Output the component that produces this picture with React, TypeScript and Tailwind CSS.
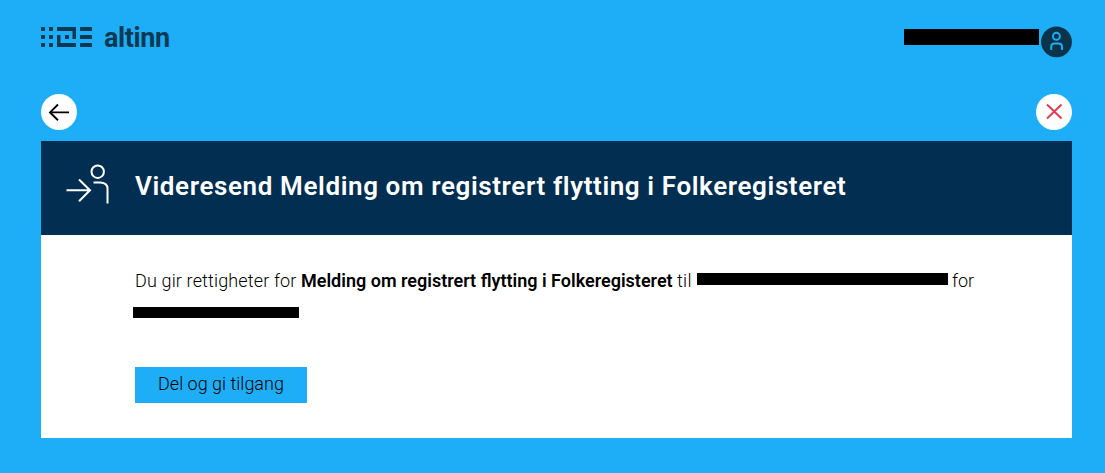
const squares: [number, number, number, number][] = [
  [0, 0, 4, 4], [0, 8, 4, 4], [0, 16, 4, 4],
  [8, 0, 4, 4], [8, 8, 4, 4], [8, 16, 4, 4],
  [39, 0, 12, 4], [39, 8, 12, 4], [39, 16, 12, 4],
  [24, 8, 4, 4],
];

function Logo() {
  return (
    <div className="flex items-start">
      <svg className="mt-[3px]" width="51" height="20" viewBox="0 0 51 20" fill="#0a3a53">
        {squares.map(([x, y, w, h]) => (
          <rect key={`${x}-${y}`} x={x} y={y} width={w} height={h} />
        ))}
        <path d="M16 0H35V12H31.5V4H16ZM16 8H19.5V16H35V20H16Z" />
      </svg>
      <span className="ml-3 pt-px text-[27px] leading-[27px] font-bold tracking-[-0.4px] text-[#0a3a53]">altinn</span>
    </div>
  );
}

function Avatar() {
  return (
    <svg width="32" height="32" viewBox="0 0 32 32" fill="none">
      <circle cx="16.5" cy="15.8" r="15.4" fill="#0a3449" />
      <g stroke="#1eaef7" strokeWidth="1.9">
        <circle cx="16.4" cy="10.3" r="3.5" />
        <path d="M11.2 24V20.8Q11.2 17.5 14.5 17.5H18.5Q22 17.5 22 20.8V24" />
      </g>
    </svg>
  );
}

function ForwardIcon() {
  return (
    <svg className="mb-2 shrink-0" width="46" height="42" viewBox="0 0 46 42" fill="none" stroke="white" strokeWidth="2">
      <circle cx="32.7" cy="8.7" r="6.2" />
      <path d="M28.5 19.5H35.5Q42.5 20 42.5 25.5V40.5" />
      <path d="M1.5 27.3H25M14 16.5L25 27.3L14 38.2" />
    </svg>
  );
}

export default function App() {
  return (
    <div className="h-[473px] w-[1105px] overflow-hidden bg-[#1eaef7] pr-[33px] pl-[41px] font-['Roboto',sans-serif]">
      <header className="flex h-[94px] items-start justify-between pt-6">
        <Logo />
        <div className="flex items-start pt-0.5">
          <div className="mt-[3px] mr-px h-4 w-[135px] bg-black" />
          <Avatar />
        </div>
      </header>

      <nav className="flex h-[47px] items-start justify-between">
        <button aria-label="Tilbake" className="flex size-9 items-center justify-center rounded-full bg-white">
          <svg width="36" height="36" viewBox="0 0 36 36" fill="none" stroke="black" strokeWidth="1.9">
            <path d="M28 18.4H9M17 10.5L9 18.4L17 26.3" />
          </svg>
        </button>
        <button aria-label="Lukk" className="flex size-9 items-center justify-center rounded-full bg-white">
          <svg width="36" height="36" viewBox="0 0 36 36" fill="none" stroke="#e23b53" strokeWidth="2">
            <path d="M11 10.5L25.5 24.5M25.5 10.5L11 24.5" />
          </svg>
        </button>
      </nav>

      <main className="h-[297px] bg-white">
        <div className="flex h-[94px] items-center bg-[#022f51] pl-6">
          <ForwardIcon />
          <h1 className="mb-1 ml-6 text-[26px] leading-8 font-semibold tracking-[0.61px] whitespace-nowrap text-white">
            Videresend Melding om registrert flytting i Folkeregisteret
          </h1>
        </div>
        <div className="pt-[30px] pl-[94px] text-[18px] leading-8 text-black">
          <p className="flex whitespace-nowrap">
            <span className="w-[166px] font-light tracking-[0.15px]">Du gir rettigheter for</span>
            <strong className="w-[376px] font-semibold">Melding om registrert flytting i Folkeregisteret</strong>
            <span className="w-5 font-light tracking-[0.3px]">til</span>
            <span className="mt-2 h-3 w-[251px] bg-black" />
            <span className="ml-1 font-light">for</span>
          </p>
          <div className="mt-[10px] -ml-0.5 h-[11px] w-[166px] bg-black" />
          <button className="mt-[49px] flex h-9 w-[172px] items-center justify-center bg-[#1eaef7] pb-0.5 font-light whitespace-nowrap">
            Del og gi tilgang
          </button>
        </div>
      </main>
    </div>
  );
}
